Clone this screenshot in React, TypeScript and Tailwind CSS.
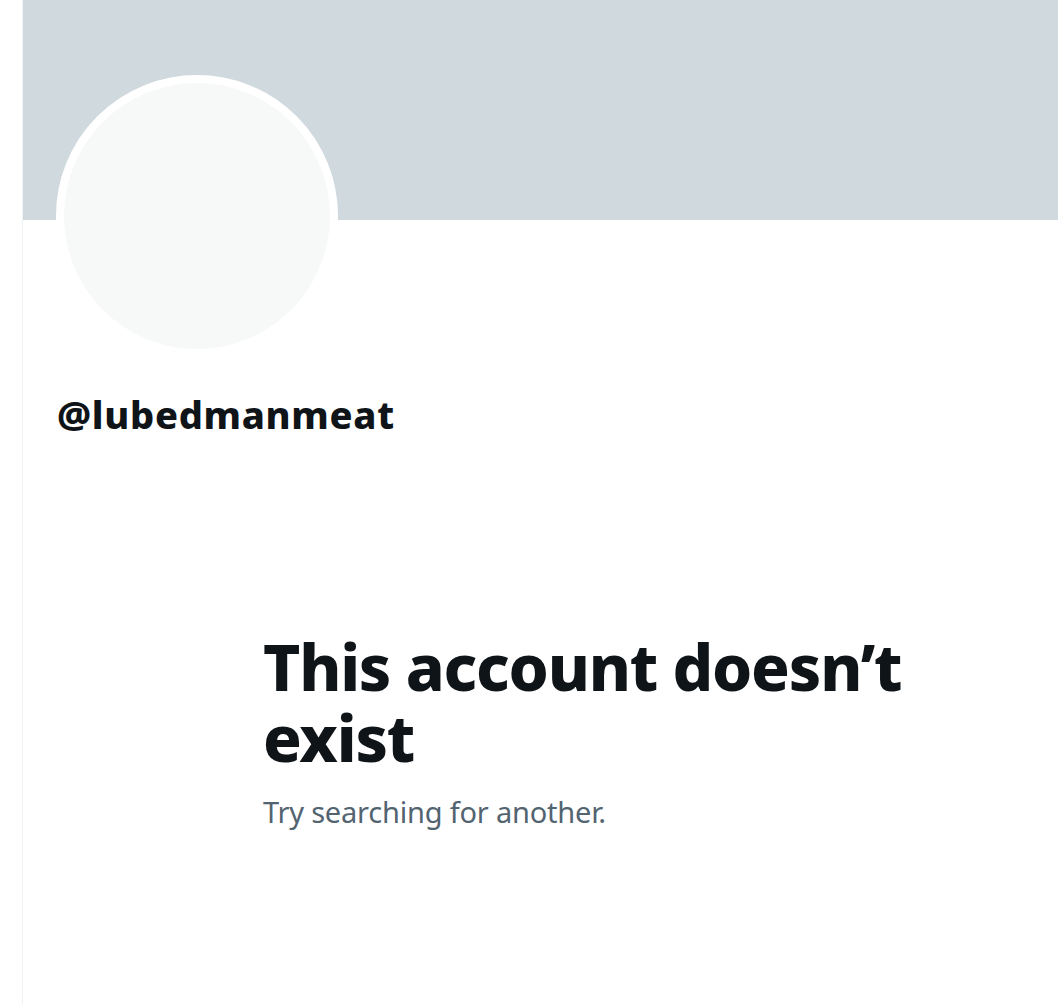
import React from "react";

export default function App() {
  return (
    <div className="flex min-h-[1004px] w-[1058px] bg-white" style={{ fontFamily: "'Noto Sans', Roboto, sans-serif" }}>
      <div className="w-[22px] shrink-0" />
      <div className="flex flex-1 flex-col border-l border-[#eff3f4]">
        <div className="h-[220px] bg-[#cfd9de]" />
        <div className="ml-[33px] -mt-[145px] h-[282px] w-[282px] rounded-full border-8 border-white bg-[#f7f9f9]" />
        <div className="ml-[34px] mt-[33px] text-[38px] font-extrabold leading-[48px] tracking-[0.7px] text-[#0f1419]">@lubedmanmeat</div>
        <div className="ml-[240px] mt-[193px] w-[660px]">
          <h1 className="text-[64px] font-extrabold leading-[71px] tracking-[-1.2px] text-[#0f1419]">This account doesn’t exist</h1>
          <p className="mt-[19px] text-[29px] leading-[40px] tracking-[-0.2px] text-[#536471]">Try searching for another.</p>
        </div>
      </div>
    </div>
  );
}
